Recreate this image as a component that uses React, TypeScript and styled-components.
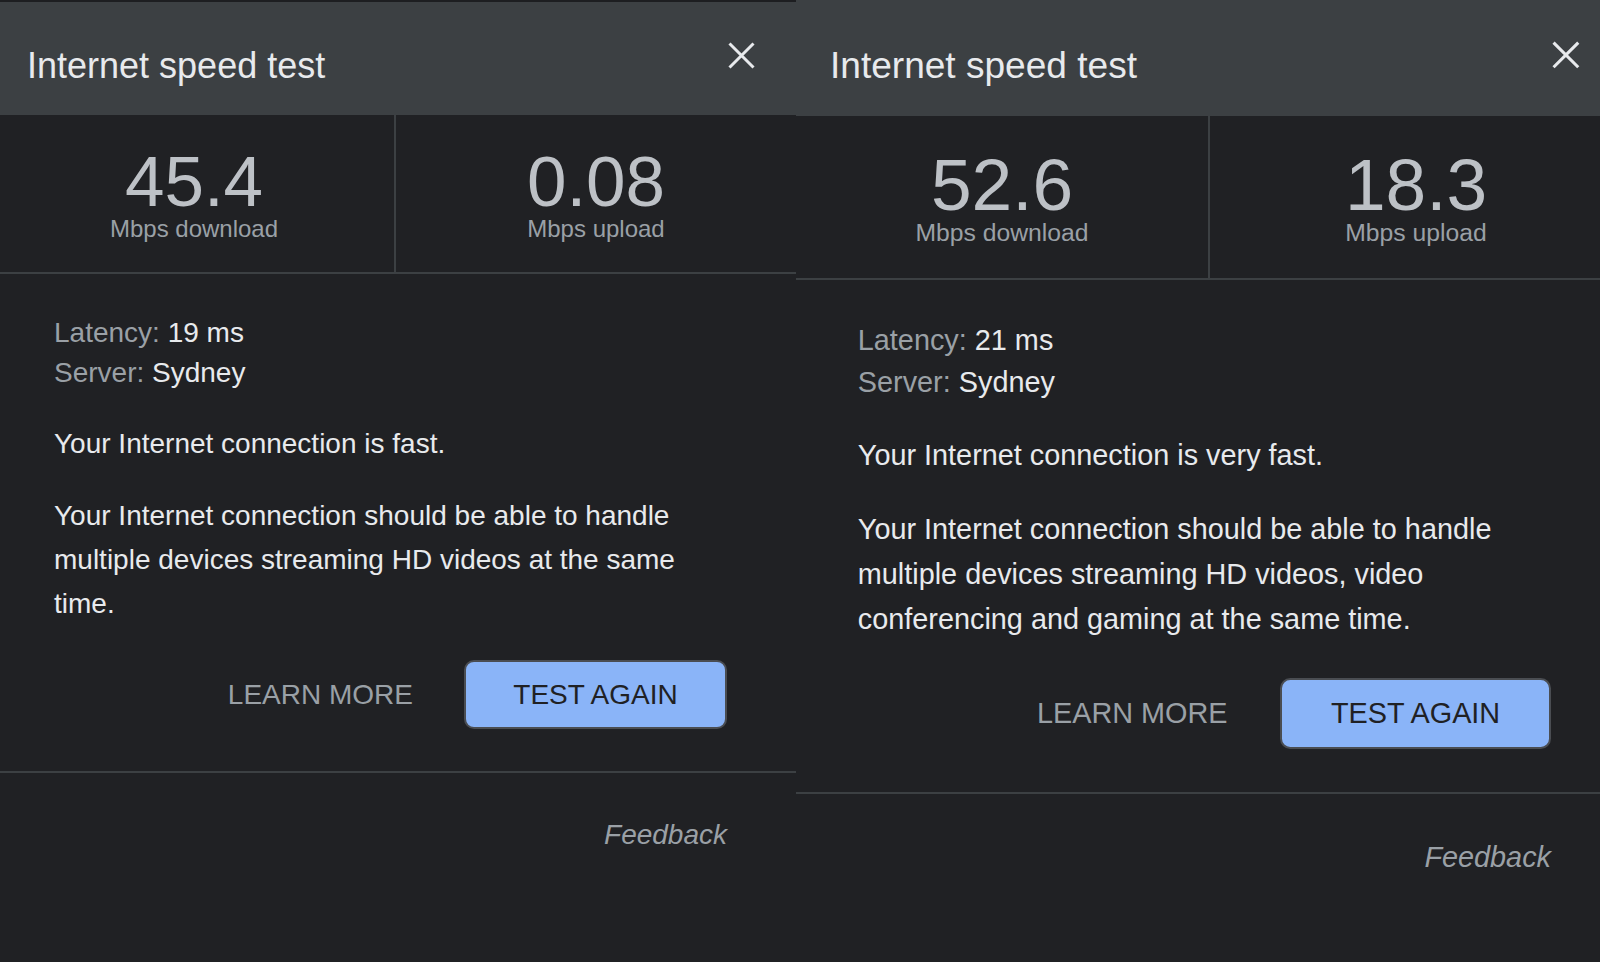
import React from "react"
import styled, { createGlobalStyle } from "styled-components"

const GlobalStyle = createGlobalStyle`
  body {
    margin: 0;
    background: #202124;
    font-family: "Liberation Sans", Arial, sans-serif;
  }
`

const Page = styled.div`
  display: flex;
  width: 1600px;
  height: 962px;
  overflow: hidden;
  background: #202124;
`

interface PanelProps {
  $zoom: number
  $lead: number
}

const Panel = styled.section<PanelProps>`
  --lead: ${props => props.$lead}px;
  flex: none;
  width: calc(796px + var(--lead));
  zoom: ${props => props.$zoom};
  display: flex;
  flex-direction: column;
  background: #202124;
  color: #e8eaed;
`

const Header = styled.header<{ $edge?: boolean }>`
  height: 73px;
  display: flex;
  justify-content: space-between;
  align-items: flex-start;
  padding: 40px 41px 0 calc(27px + var(--lead));
  background: #3c4043;
  border-top: ${props => props.$edge ? "2px solid #1d1e21" : "0"};
`

const Title = styled.h1`
  margin: 6px 0 0;
  font-size: 36px;
  line-height: 36px;
  font-weight: 400;
  color: #e8eaed;
`

const CloseButton = styled.button`
  width: 27px;
  height: 27px;
  padding: 0;
  border: 0;
  background: none;
  cursor: pointer;
  display: block;
`

const Stats = styled.div`
  box-sizing: border-box;
  height: 159px;
  display: grid;
  grid-template-columns: calc(396px + var(--lead)) 1fr;
  border-bottom: 2px solid #3c4043;
`

const StatCell = styled.div<{ $first?: boolean }>`
  display: flex;
  flex-direction: column;
  align-items: center;
  padding-top: 31px;
  padding-left: ${props => props.$first ? "var(--lead)" : "0"};
  padding-right: ${props => props.$first ? "6px" : "0"};
  border-right: ${props => props.$first ? "2px solid #3c4043" : "0"};
`

const StatValue = styled.div`
  font-size: 71px;
  line-height: 72px;
  color: #bdc1c6;
`

const StatLabel = styled.div`
  font-size: 24px;
  line-height: 22px;
  color: #9aa0a6;
`

const Body = styled.div`
  padding: 39px 69px 42px calc(54px + var(--lead));
  border-bottom: 2px solid #3c4043;
`

const InfoLine = styled.div`
  font-size: 28px;
  line-height: 40px;
  color: #e8eaed;
`

const InfoKey = styled.span`
  color: #9aa0a6;
`

const Verdict = styled.p`
  margin: 29px 0 0;
  font-size: 28px;
  line-height: 44px;
`

const Advice = styled.p`
  margin: 28px 0 0;
  max-width: 650px;
  font-size: 28px;
  line-height: 44px;
`

const ButtonRow = styled.div`
  display: flex;
  justify-content: flex-end;
  align-items: center;
  gap: 51px;
  margin-top: 34px;
`

const TextButton = styled.button`
  padding: 0;
  border: 0;
  background: none;
  font-family: inherit;
  font-size: 28px;
  color: #9aa0a6;
  cursor: pointer;
`

const FilledButton = styled.button`
  box-sizing: border-box;
  width: 263px;
  height: 69px;
  border: 2px solid #4a4d52;
  border-radius: 10px;
  background: #8ab4f8;
  color: #202124;
  font-family: inherit;
  font-size: 28px;
  cursor: pointer;
`

const Footer = styled.div`
  display: flex;
  justify-content: flex-end;
  padding: 46px 69px 0 0;
`

const FeedbackLink = styled.a`
  font-size: 28px;
  line-height: 32px;
  font-style: italic;
  color: #9aa0a6;
  text-decoration: none;
`

type SpeedResult = {
  download: string
  upload: string
  latency: string
  server: string
  verdict: string
  advice: string
  zoom: number
  lead: number
  edge?: boolean
}

const results: SpeedResult[] = [
  {
    download: "45.4",
    upload: "0.08",
    latency: "19 ms",
    server: "Sydney",
    verdict: "Your Internet connection is fast.",
    advice: "Your Internet connection should be able to handle multiple devices streaming HD videos at the same time.",
    zoom: 1,
    lead: 0,
    edge: true,
  },
  {
    download: "52.6",
    upload: "18.3",
    latency: "21 ms",
    server: "Sydney",
    verdict: "Your Internet connection is very fast.",
    advice: "Your Internet connection should be able to handle multiple devices streaming HD videos, video conferencing and gaming at the same time.",
    zoom: 1.03,
    lead: 6,
  },
]

function CloseIcon() {
  return (
    <svg width="27" height="27" viewBox="0 0 27 27">
      <path d="M1.5 1.5 L25.5 25.5 M25.5 1.5 L1.5 25.5" stroke="#e8eaed" strokeWidth="3" fill="none" />
    </svg>
  )
}

function SpeedTestPanel(props: SpeedResult) {
  return (
    <Panel $zoom={props.zoom} $lead={props.lead}>
      <Header $edge={props.edge}>
        <Title>Internet speed test</Title>
        <CloseButton aria-label="Close"><CloseIcon /></CloseButton>
      </Header>
      <Stats>
        <StatCell $first>
          <StatValue>{props.download}</StatValue>
          <StatLabel>Mbps download</StatLabel>
        </StatCell>
        <StatCell>
          <StatValue>{props.upload}</StatValue>
          <StatLabel>Mbps upload</StatLabel>
        </StatCell>
      </Stats>
      <Body>
        <InfoLine><InfoKey>Latency:</InfoKey> {props.latency}</InfoLine>
        <InfoLine><InfoKey>Server:</InfoKey> {props.server}</InfoLine>
        <Verdict>{props.verdict}</Verdict>
        <Advice>{props.advice}</Advice>
        <ButtonRow>
          <TextButton>LEARN MORE</TextButton>
          <FilledButton>TEST AGAIN</FilledButton>
        </ButtonRow>
      </Body>
      <Footer>
        <FeedbackLink href="#">Feedback</FeedbackLink>
      </Footer>
    </Panel>
  )
}

export default function App() {
  return (
    <>
      <GlobalStyle />
      <Page>
        { results.map((r, i) => <SpeedTestPanel key={i} {...r} />) }
      </Page>
    </>
  )
}
